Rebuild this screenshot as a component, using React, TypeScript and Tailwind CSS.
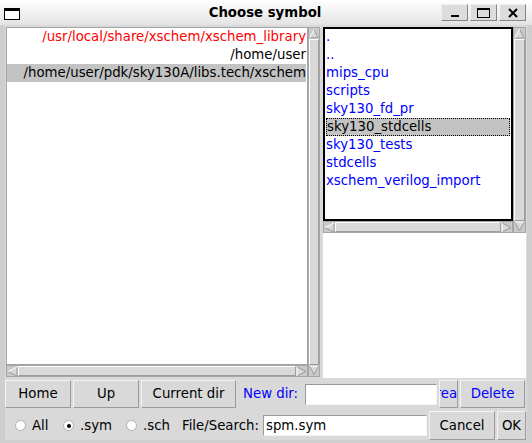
import React from "react";

type Dir = "up" | "down" | "left" | "right";

function Arrow({ dir }: { dir: Dir }) {
  const pts: Record<Dir, string> = {
    up: "5.5,1 10,10 1,10",
    down: "1,1 10,1 5.5,10",
    left: "1,5.5 10,1 10,10",
    right: "1,1 10,5.5 1,10",
  };
  const light: Record<Dir, string> = {
    up: "M1,10 L5.5,1",
    down: "M1,1 L10,1",
    left: "M1,5.5 L10,1",
    right: "M1,1 L1,10",
  };
  const dark: Record<Dir, string> = {
    up: "M5.5,1 L10,10 L1,10",
    down: "M10,1 L5.5,10 L1,1",
    left: "M10,1 L10,10 L1,5.5",
    right: "M1,10 L10,5.5 L1,1",
  };
  return (
    <svg width="11" height="11" viewBox="0 0 11 11" className="block">
      <polygon points={pts[dir]} fill="#d9d9d9" />
      <path d={dark[dir]} fill="none" stroke="#9a9a9a" strokeWidth="1" />
      <path d={light[dir]} fill="none" stroke="#ffffff" strokeWidth="1" />
    </svg>
  );
}

function VScroll({ className = "" }: { className?: string }) {
  return (
    <div className={"flex flex-col items-center bg-[#c9c9c9] border border-[#a6a6a6] " + className}>
      <div className="h-[11px] w-full flex items-center justify-center">
        <Arrow dir="up" />
      </div>
      <div className="flex-1 w-full bg-[#d9d9d9] border border-t-white border-l-white border-b-[#9c9c9c] border-r-[#9c9c9c]" />
      <div className="h-[11px] w-full flex items-center justify-center">
        <Arrow dir="down" />
      </div>
    </div>
  );
}

function HScroll({ className = "" }: { className?: string }) {
  return (
    <div className={"flex flex-row items-center bg-[#c9c9c9] border border-[#a6a6a6] " + className}>
      <div className="w-[11px] h-full flex items-center justify-center">
        <Arrow dir="left" />
      </div>
      <div className="flex-1 h-full bg-[#d9d9d9] border border-t-white border-l-white border-b-[#9c9c9c] border-r-[#9c9c9c]" />
      <div className="w-[11px] h-full flex items-center justify-center">
        <Arrow dir="right" />
      </div>
    </div>
  );
}

function Btn({ children, className = "" }: { children: React.ReactNode; className?: string }) {
  return (
    <div
      className={
        "flex items-center justify-center overflow-hidden whitespace-nowrap bg-[#d9d9d9] border border-t-[#f4f4f4] border-l-[#f4f4f4] border-b-[#9a9a9a] border-r-[#9a9a9a] " +
        className
      }
    >
      {children}
    </div>
  );
}

function Radio({ label, checked, className = "" }: { label: string; checked?: boolean; className?: string }) {
  return (
    <div className={"flex items-center shrink-0 " + className}>
      <div className="w-[11px] h-[11px] rounded-full bg-white border border-[#b0b0b0] flex items-center justify-center">
        {checked && <div className="w-[4px] h-[4px] rounded-full bg-black" />}
      </div>
      <span className="ml-[6px]">{label}</span>
    </div>
  );
}

export default function App() {
  const rightItems = [
    ".",
    "..",
    "mips_cpu",
    "scripts",
    "sky130_fd_pr",
    "sky130_stdcells",
    "sky130_tests",
    "stdcells",
    "xschem_verilog_import",
  ];
  return (
    <div className="w-[532px] h-[443px] flex flex-col bg-[#d9d9d9] overflow-hidden font-['DejaVu_Sans',sans-serif] text-[13.3px] text-black leading-none">
      {/* Title bar */}
      <div className="h-[25px] shrink-0 grid grid-cols-[1fr_auto_1fr] items-center bg-linear-to-b from-[#ffffff] to-[#e3e3e3]">
        <div className="flex items-center pl-[4px]">
          <div className="w-[16px] h-[12px] bg-white border border-black border-t-[3px] mt-[2px]" />
        </div>
        <div className="font-bold text-[13.3px] pt-[1px] -ml-[2px]">Choose symbol</div>
        <div className="flex items-center justify-end gap-[2px] pr-[6px]">
          <div className="w-[27px] h-[17px] bg-[#dcdcdc] border border-t-[#f0f0f0] border-l-[#f0f0f0] border-b-[#858585] border-r-[#858585] flex items-end justify-center pb-[3px]">
            <div className="w-[8px] h-[2px] bg-black" />
          </div>
          <div className="w-[27px] h-[17px] bg-[#dcdcdc] border border-t-[#f0f0f0] border-l-[#f0f0f0] border-b-[#858585] border-r-[#858585] flex items-center justify-center">
            <div className="w-[13px] h-[10px] border border-black border-t-2" />
          </div>
          <div className="w-[27px] h-[17px] bg-[#dcdcdc] border border-t-[#f0f0f0] border-l-[#f0f0f0] border-b-[#858585] border-r-[#858585] flex items-center justify-center">
            <svg width="10" height="10" viewBox="0 0 10 10">
              <path d="M1,1 L9,9 M9,1 L1,9" stroke="black" strokeWidth="2" />
            </svg>
          </div>
        </div>
      </div>

      {/* Body */}
      <div className="flex-1 flex flex-col border-l-[5px] border-r-[5px] border-b-[3px] border-[#cecece]">
        {/* top section */}
        <div className="flex h-[351px] mt-[2px] shrink-0">
          {/* left pane */}
          <div className="ml-[1px] w-[314px] grid grid-cols-[302px_12px] grid-rows-[338px_12px]">
            <div className="bg-white border border-[#a3a3a3] overflow-hidden flex flex-col items-end pr-[1px]">
              <div className="h-[18px] w-full flex items-center justify-end text-[#ff0000] whitespace-nowrap">
                /usr/local/share/xschem/xschem_library
              </div>
              <div className="h-[18px] w-full flex items-center justify-end whitespace-nowrap">/home/user</div>
              <div className="h-[18px] w-full flex items-center justify-end bg-[#c3c3c3] whitespace-nowrap">
                /home/user/pdk/sky130A/libs.tech/xschem
              </div>
            </div>
            <VScroll className="row-span-2" />
            <HScroll />
          </div>

          {/* right pane */}
          <div className="ml-[3px] w-[203px] flex flex-col">
            <div className="grid grid-cols-[190px_13px] grid-rows-[194px_12px] shrink-0">
              <div className="bg-white border-2 border-black overflow-hidden flex flex-col pl-[1px] pr-[1px]">
                <div className="-mt-[1px] flex flex-col">
                  {rightItems.map((it) =>
                    it === "sky130_stdcells" ? (
                      <div
                        key={it}
                        className="h-[18px] flex items-center bg-[#c3c3c3] border border-dotted border-black whitespace-nowrap text-black"
                      >
                        {it}
                      </div>
                    ) : (
                      <div key={it} className="h-[18px] flex items-center text-[#0000ff] whitespace-nowrap -mt-0 pb-[1px]">
                        {it}
                      </div>
                    )
                  )}
                </div>
              </div>
              <VScroll className="row-span-2" />
              <HScroll />
            </div>
            <div className="flex-1 bg-white" />
          </div>
        </div>

        {/* row 1 */}
        <div className="flex h-[28px] mt-[2px] shrink-0">
          <Btn className="w-[66px]">Home</Btn>
          <Btn className="w-[66px] ml-[2px]">Up</Btn>
          <Btn className="w-[95px] ml-[2px]">Current dir</Btn>
          <div className="ml-[7px] w-[62px] flex items-center text-[#0000ff] whitespace-nowrap">New dir:</div>
          <div className="w-[132px] h-[21px] self-center bg-white border border-t-[#9a9a9a] border-l-[#9a9a9a] border-b-[#f4f4f4] border-r-[#f4f4f4]" />
          <Btn className="w-[19px] ml-[2px] text-[#0000ff]">Create</Btn>
          <Btn className="w-[65px] ml-[2px] text-[#0000ff]">Delete</Btn>
        </div>

        {/* row 2 */}
        <div className="flex h-[29px] mt-[3px] shrink-0">
          <Radio label="All" className="ml-[10px] w-[48px]" />
          <Radio label=".sym" checked className="w-[63px]" />
          <Radio label=".sch" className="w-[56px]" />
          <div className="w-[81px] flex items-center whitespace-nowrap">File/Search:</div>
          <div className="w-[164px] h-[21px] self-center bg-white border border-t-[#9a9a9a] border-l-[#9a9a9a] border-b-[#f4f4f4] border-r-[#f4f4f4] flex items-center pl-[2px]">
            spm.sym
          </div>
          <Btn className="w-[66px] ml-[2px]">Cancel</Btn>
          <Btn className="w-[29px] ml-[2px]">OK</Btn>
        </div>
      </div>
    </div>
  );
}
